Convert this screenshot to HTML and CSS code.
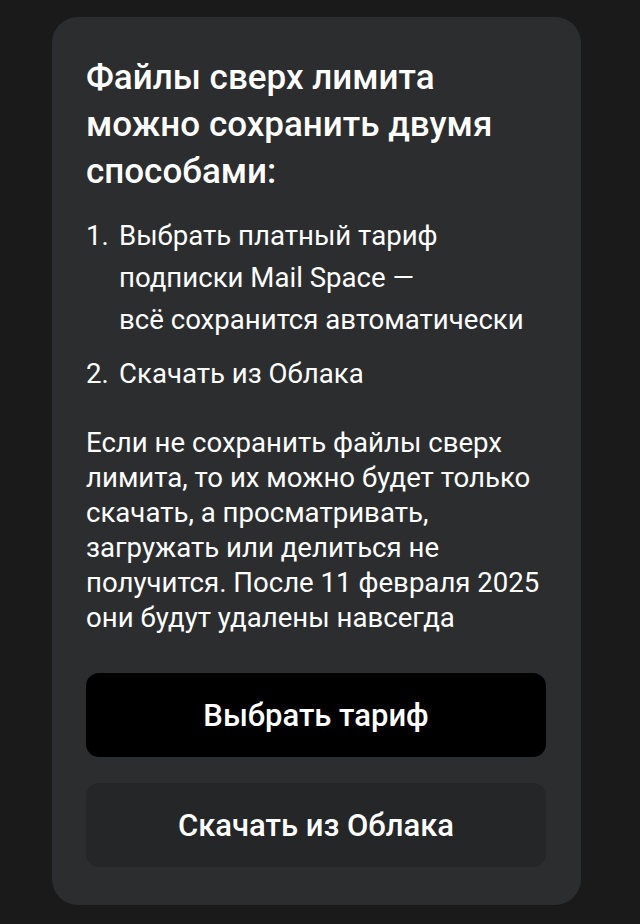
FILE: index.html
```html
<!DOCTYPE html>
<html lang="ru">
<head>
    <meta charset="UTF-8">
    <meta name="viewport" content="width=device-width, initial-scale=1.0">
    <title>Файлы сверх лимита</title>
    <link rel="stylesheet" href="styles.css">
</head>
<body>
    <div class="sheet">
        <h1 class="sheet-title">Файлы сверх лимита можно сохранить двумя способами:</h1>
        <ol class="ways">
            <li><span>Выбрать платный тариф подписки Mail&nbsp;Space&nbsp;—<br>всё сохранится автоматически</span></li>
            <li><span>Скачать из Облака</span></li>
        </ol>
        <p class="note">Если не сохранить файлы сверх лимита, то их можно будет только скачать, а просматривать, загружать или делиться не получится. После 11 февраля 2025 они будут удалены навсегда</p>
        <div class="actions">
            <button class="btn btn-primary">Выбрать тариф</button>
            <button class="btn btn-secondary">Скачать из Облака</button>
        </div>
    </div>
</body>
</html>
```

FILE: styles.css
```css
body {
    font-family: Roboto, "Noto Sans", sans-serif;
    margin: 0;
    background-color: #1a1a1a;
    color: #ffffff;
    padding: 17px 59px 21px 52px;
}

.sheet {
    background-color: #2c2d2f;
    border-radius: 26px;
    padding: 37px 33px 38px 34px;
}

.sheet-title {
    font-size: 35px;
    font-weight: 500;
    line-height: 47px;
    margin: 0 0 20px;
    padding-right: 32px;
}

.ways {
    margin: 0;
    padding: 0;
    list-style: none;
    counter-reset: way;
    font-size: 27.6px;
    line-height: 42px;
}

.ways li {
    display: flex;
    counter-increment: way;
}

.ways li::before {
    content: counter(way) ".";
    flex: 0 0 33px;
}

.ways li + li {
    margin-top: 12px;
}

.note {
    font-size: 27.6px;
    line-height: 35px;
    margin: 30px 0 38px;
}

.actions {
    display: flex;
    flex-direction: column;
    gap: 26px;
    margin-right: 2px;
}

.btn {
    height: 84px;
    border: none;
    border-radius: 13px;
    font-family: inherit;
    font-size: 31px;
    font-weight: 500;
    color: #ffffff;
    cursor: pointer;
}

.btn-primary {
    background-color: #000000;
}

.btn-secondary {
    background-color: #252628;
}
```
